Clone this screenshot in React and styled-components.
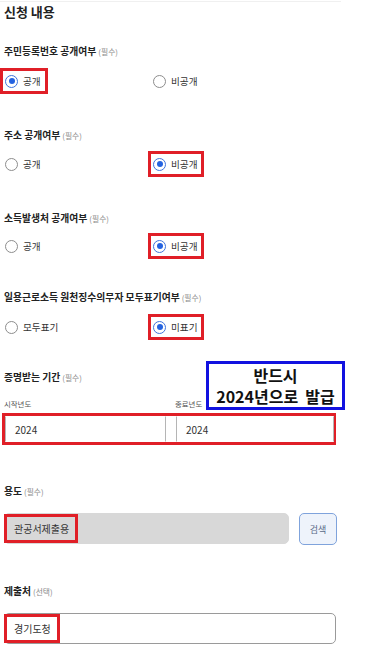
import React from "react"
import styled, { createGlobalStyle } from "styled-components"

const GlobalStyle = createGlobalStyle`
  html, body {
    margin: 0;
    padding: 0;
    background: #fff;
  }
  body {
    font-family: "Noto Sans CJK KR", "Noto Sans", sans-serif;
    color: #222;
  }
`

const Page = styled.div`
  width: 372px;
  padding: 0 4px;
  box-sizing: border-box;
`

const TopLine = styled.div`
  width: 341px;
  margin: 1px 0 0 -4px;
  border-top: 1px solid #f0f0f0;
`

const Title = styled.h2`
  margin: 0;
  font-size: 13px;
  font-weight: 700;
  line-height: 20px;
  color: #222;
`

const Section = styled.section`
  position: relative;
  margin-top: ${(p) => p.$top}px;
`

const Label = styled.div`
  font-size: 9.8px;
  font-weight: 700;
  line-height: 16px;
  color: #222;
  white-space: nowrap;

  span {
    font-size: 7.8px;
    font-weight: 400;
    color: #8a8a8a;
    margin-left: 2px;
  }
`

const RadioRow = styled.div`
  display: grid;
  grid-template-columns: 148px auto;
  margin: ${(p) => p.$gap || 8}px 0 0 -4px;
`

const Mark = styled.div`
  display: inline-flex;
  align-items: center;
  justify-self: start;
  border: 3px solid ${(p) => (p.$on ? "#e01f27" : "transparent")};
  background: ${(p) => (p.$on ? "#fff" : "transparent")};
`

const Option = styled.label`
  display: inline-flex;
  align-items: center;
  gap: 5px;
  height: 20px;
  padding: 0 4px 0 2px;
  font-size: 9.6px;
  color: #333;
`

const Circle = styled.span`
  width: 13px;
  height: 13px;
  border-radius: 50%;
  box-sizing: border-box;
  border: 1px solid ${(p) => (p.$checked ? "#3f74dc" : "#8d8d8d")};
  display: inline-flex;
  align-items: center;
  justify-content: center;

  &::after {
    content: "";
    width: 6px;
    height: 6px;
    border-radius: 50%;
    background: #2563e0;
    display: ${(p) => (p.$checked ? "block" : "none")};
  }
`

const Radio = ({ text, checked }) => (
  <Mark $on={checked}>
    <Option>
      <Circle $checked={checked} />
      {text}
    </Option>
  </Mark>
)

const Note = styled.div`
  position: absolute;
  left: 202px;
  top: -8px;
  width: 139px;
  height: 49px;
  box-sizing: border-box;
  border: 3px solid #1212e0;
  background: #fff;
  display: flex;
  align-items: center;
  justify-content: center;
  text-align: center;
  font-size: 16px;
  font-weight: 700;
  line-height: 21px;
  color: #111;
  white-space: pre;
  z-index: 1;
`

const YearGrid = styled.div`
  display: grid;
  grid-template-columns: 161px 158px;
  column-gap: 10px;
`

const SubLabel = styled.div`
  margin-top: 12px;
  font-size: 7.4px;
  line-height: 12px;
  color: #555;
`

const YearBox = styled.div`
  margin: 3px 0 0 -2px;
  width: 334px;
  box-sizing: border-box;
  border: 3px solid #e01f27;
`

const YearInput = styled.div`
  height: 26px;
  box-sizing: border-box;
  border: 1px solid #b5b5b5;
  border-top-color: #fff;
  border-bottom-color: #fff;
  padding-left: 9px;
  display: flex;
  align-items: center;
  font-size: 10px;
  color: #333;
`

const FieldRow = styled.div`
  display: flex;
  gap: 10px;
  margin-top: 13px;
`

const Field = styled.div`
  width: ${(p) => p.$w}px;
  height: 31px;
  box-sizing: border-box;
  border-radius: 5px;
  background: ${(p) => (p.$disabled ? "#d8d8d8" : "#fff")};
  border: 1px solid ${(p) => (p.$disabled ? "#d8d8d8" : "#9a9a9a")};
  display: flex;
  align-items: center;
`

const FieldMark = styled.div`
  height: 29px;
  box-sizing: border-box;
  border: 3px solid #e01f27;
  padding: 0 6px 0 7px;
  display: flex;
  align-items: center;
  font-size: 10px;
  color: #333;
  margin-left: -1px;
`

const SearchButton = styled.button`
  width: 38px;
  height: 32px;
  border-radius: 5px;
  border: 1px solid #7fa3dc;
  background: #eef3fb;
  color: #5a6a88;
  font-family: inherit;
  font-size: 9px;
  padding: 0;
`

export default function App() {
  return (
    <>
      <GlobalStyle />
      <Page>
        <TopLine />
        <Title>신청 내용</Title>

        <Section $top={21}>
          <Label>주민등록번호 공개여부<span>(필수)</span></Label>
          <RadioRow>
            <Radio text="공개" checked />
            <Radio text="비공개" />
          </RadioRow>
        </Section>

        <Section $top={33}>
          <Label>주소 공개여부<span>(필수)</span></Label>
          <RadioRow $gap={7}>
            <Radio text="공개" />
            <Radio text="비공개" checked />
          </RadioRow>
        </Section>

        <Section $top={33}>
          <Label>소득발생처 공개여부<span>(필수)</span></Label>
          <RadioRow $gap={6}>
            <Radio text="공개" />
            <Radio text="비공개" checked />
          </RadioRow>
        </Section>

        <Section $top={30}>
          <Label>일용근로소득 원천징수의무자 모두표기여부<span>(필수)</span></Label>
          <RadioRow $gap={8}>
            <Radio text="모두표기" />
            <Radio text="미표기" checked />
          </RadioRow>
        </Section>

        <Section $top={29}>
          <Label>증명받는 기간<span>(필수)</span></Label>
          <Note>{"반드시\n2024년으로  발급"}</Note>
          <YearGrid>
            <SubLabel>시작년도</SubLabel>
            <SubLabel>종료년도</SubLabel>
          </YearGrid>
          <YearBox>
            <YearGrid>
              <YearInput>2024</YearInput>
              <YearInput>2024</YearInput>
            </YearGrid>
          </YearBox>
        </Section>

        <Section $top={38}>
          <Label>용도<span>(필수)</span></Label>
          <FieldRow>
            <Field $w={285} $disabled>
              <FieldMark>관공서제출용</FieldMark>
            </Field>
            <SearchButton>검색</SearchButton>
          </FieldRow>
        </Section>

        <Section $top={38}>
          <Label>제출처<span>(선택)</span></Label>
          <FieldRow>
            <Field $w={332}>
              <FieldMark>경기도청</FieldMark>
            </Field>
          </FieldRow>
        </Section>
      </Page>
    </>
  )
}
